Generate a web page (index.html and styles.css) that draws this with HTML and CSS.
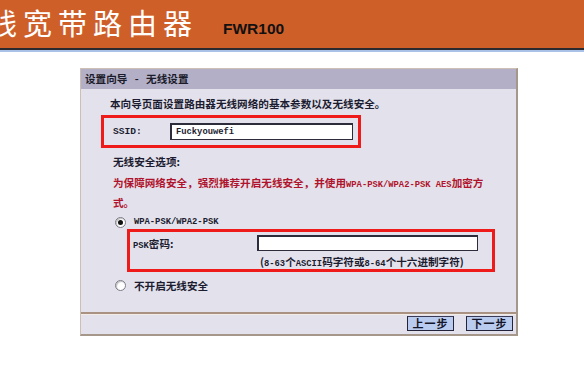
FILE: index.html
```html
<!DOCTYPE html>
<html lang="zh-CN">
<head>
<meta charset="utf-8">
<title>无线宽带路由器 FWR100</title>
<link rel="stylesheet" href="styles.css">
</head>
<body>
<header class="top">
  <span class="brand-name">无线宽带路由器</span>
  <span class="model">FWR100</span>
</header>
<div class="rule"></div>
<main class="page">
  <section class="panel">
    <div class="panel-title">设置向导 - 无线设置</div>
    <div class="panel-body">
      <p class="intro">本向导页面设置路由器无线网络的基本参数以及无线安全。</p>
      <div class="hl ssid-box">
        <span class="label ssid-label en">SSID:</span>
        <div class="input ssid-input"><span class="en">Fuckyouwefi</span></div>
      </div>
      <p class="sec-title">无线安全选项:</p>
      <p class="warn"><span>为保障网络安全，强烈推荐开启无线安全，并使用</span><span class="en">WPA-PSK/WPA2-PSK AES</span><span>加密方</span><br><span>式。</span></p>
      <div class="radio-row"><span class="radio checked"></span><span class="en">WPA-PSK/WPA2-PSK</span></div>
      <div class="hl psk-box">
        <div class="psk-row"><span class="label psk-label"><span class="en">PSK</span>密码:</span><div class="input psk-input"></div></div>
        <div class="hint">(<span class="en">8-63</span>个<span class="en">ASCII</span>码字符或<span class="en">8-64</span>个十六进制字符)</div>
      </div>
      <div class="radio-row radio-row-2"><span class="radio"></span><span>不开启无线安全</span></div>
    </div>
    <div class="panel-foot">
      <button class="btn">上一步</button>
      <button class="btn">下一步</button>
    </div>
  </section>
</main>
</body>
</html>
```

FILE: styles.css
```css
* { box-sizing: border-box; }
html, body { margin: 0; padding: 0; background: #ffffff; }
body {
  width: 584px;
  height: 375px;
  overflow: hidden;
  font-family: "Noto Sans CJK SC", "Liberation Sans", sans-serif;
  color: #1c1c30;
}

.top {
  height: 48px;
  background: #cf5f29;
  display: flex;
  align-items: flex-start;
  overflow: hidden;
}
.brand-name {
  margin: 7px 0 0 -47px;
  font-size: 29px;
  line-height: 30px;
  letter-spacing: 6px;
  color: #ffffff;
  white-space: nowrap;
  flex: none;
}
.model {
  margin: 21px 0 0 25px;
  font-family: "Liberation Sans", Arial, sans-serif;
  font-weight: bold;
  font-size: 15.5px;
  line-height: 16px;
  color: #111111;
  flex: none;
}
.rule {
  height: 4px;
  border-top: 2px solid #2b2a2e;
  background: #a9c1e6;
}

.page { padding: 16px 0 0 80px; }
.panel {
  width: 438px;
  background: #e3e2ec;
  border: 1px solid #cdbfb4;
  border-right: 2px solid #a6978b;
  border-bottom: 2px solid #a6978b;
  font-size: 10.6px;
  font-weight: bold;
}
.en {
  font-family: "Liberation Mono", monospace;
  font-size: 8.8px;
  font-weight: bold;
}
.panel-title {
  height: 20px;
  line-height: 20px;
  background: #b2afc7;
  padding-left: 4px;
  color: #1b1b2a;
  word-spacing: 5px;
}
.panel-body {
  padding: 7px 0 20px 0;
}
.intro {
  margin: 0 0 0 29px;
  line-height: 16px;
}
.hl {
  border: 3px solid #ef1a1a;
}
.ssid-box {
  margin: 3px 0 0 20px;
  width: 260px;
  height: 33px;
  display: flex;
  align-items: center;
  padding-left: 9px;
}
.label { flex: none; }
.ssid-label { width: 57px; font-size: 9.6px; }
.input {
  background: #ffffff;
  border: 1px solid #2c2c3a;
  border-top-width: 2px;
  border-left-width: 2px;
}
.ssid-input {
  width: 183px;
  height: 17px;
  padding-left: 4px;
  line-height: 13px;
  display: flex;
  align-items: center;
}
.sec-title {
  margin: 6px 0 0 32px;
  line-height: 16px;
}
.warn {
  margin: 4px 0 0 32px;
  width: 390px;
  line-height: 17px;
  color: #b0142c;
  white-space: nowrap;
}
.radio-row {
  margin: 4px 0 0 34px;
  height: 14px;
  display: flex;
  align-items: center;
  gap: 8px;
}
.radio {
  width: 11px;
  height: 11px;
  border-radius: 50%;
  background: #ffffff;
  border: 1px solid #7b7b86;
  box-shadow: inset 1px 1px 1px rgba(0,0,0,0.25);
  display: flex;
  align-items: center;
  justify-content: center;
  flex: none;
}
.radio.checked::after {
  content: "";
  width: 5px;
  height: 5px;
  border-radius: 50%;
  background: #111111;
}
.psk-box {
  margin: 0 0 0 46px;
  width: 368px;
  height: 43px;
  padding: 3px 0 0 3px;
}
.psk-row {
  display: flex;
  align-items: center;
  height: 16px;
}
.psk-label { width: 124px; }
.psk-input {
  width: 221px;
  height: 16px;
}
.hint {
  margin: 4px 0 0 127px;
  line-height: 14px;
  white-space: nowrap;
}
.radio-row-2 { margin-top: 6px; }

.panel-foot {
  border-top: 2px solid #a99282;
  box-shadow: inset 0 1px 0 #f3ece6;
  height: 22px;
  display: flex;
  justify-content: flex-end;
  align-items: flex-start;
  gap: 12px;
  padding: 2px 3px 0 0;
}
.btn {
  width: 47px;
  height: 15px;
  padding: 0;
  margin: 0;
  border: 1px solid #23233a;
  border-top-color: #3a3a55;
  background: #b9cbef;
  font-family: "Noto Sans CJK SC", sans-serif;
  font-size: 11px;
  font-weight: bold;
  line-height: 13px;
  color: #141428;
  letter-spacing: 1px;
}
```
